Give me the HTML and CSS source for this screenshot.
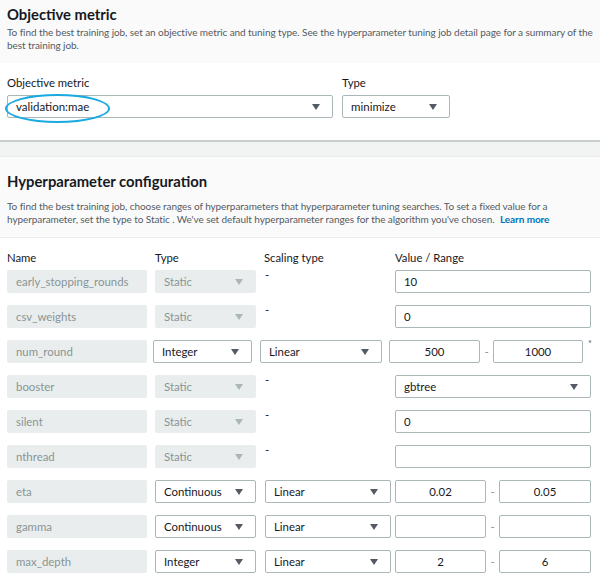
FILE: index.html
```html
<!DOCTYPE html>
<html>
<head>
<meta charset="utf-8">
<link rel="stylesheet" href="styles.css">
</head>
<body>
<div class="page">
  <div class="head head-top">
    <h2 class="title">Objective metric</h2>
    <p class="desc">To find the best training job, set an objective metric and tuning type. See the hyperparameter tuning job detail page for a summary of the best training job.</p>
  </div>
  <div class="objective">
    <div class="field field-metric">
      <div class="label">Objective metric</div>
      <div class="select sel-metric"><span class="highlight">validation:mae</span><i class="arrow"></i></div>
    </div>
    <div class="field field-type">
      <div class="label">Type</div>
      <div class="select sel-type"><span>minimize</span><i class="arrow"></i></div>
    </div>
  </div>
  <div class="divider"></div>
  <div class="head head-hp">
    <h2 class="title">Hyperparameter configuration</h2>
    <p class="desc">To find the best training job, choose ranges of hyperparameters that hyperparameter tuning searches. To set a fixed value for a hyperparameter, set the type to Static . We've set default hyperparameter ranges for the algorithm you've chosen. <a class="learn">Learn more</a></p>
  </div>
  <div class="table">
    <div class="row cols">
      <span class="c-name">Name</span><span class="c-type">Type</span><span class="c-scale">Scaling type</span><span class="c-val">Value / Range</span>
    </div>

    <div class="row">
      <div class="name">early_stopping_rounds</div>
      <div class="select static"><span>Static</span><i class="arrow"></i></div>
      <div class="nodash">-</div>
      <div class="input">10</div>
    </div>
    <div class="row">
      <div class="name">csv_weights</div>
      <div class="select static"><span>Static</span><i class="arrow"></i></div>
      <div class="nodash">-</div>
      <div class="input">0</div>
    </div>
    <div class="row row-num">
      <div class="name">num_round</div>
      <div class="select"><span>Integer</span><i class="arrow"></i></div>
      <div class="select"><span>Linear</span><i class="arrow"></i></div>
      <div class="input num">500</div>
      <div class="dash">-</div>
      <div class="input num">1000</div>
      <div class="star">*</div>
    </div>
    <div class="row">
      <div class="name">booster</div>
      <div class="select static"><span>Static</span><i class="arrow"></i></div>
      <div class="nodash">-</div>
      <div class="select"><span>gbtree</span><i class="arrow"></i></div>
    </div>
    <div class="row">
      <div class="name">silent</div>
      <div class="select static"><span>Static</span><i class="arrow"></i></div>
      <div class="nodash">-</div>
      <div class="input">0</div>
    </div>
    <div class="row">
      <div class="name">nthread</div>
      <div class="select static"><span>Static</span><i class="arrow"></i></div>
      <div class="nodash">-</div>
      <div class="input"></div>
    </div>
    <div class="row row-range">
      <div class="name">eta</div>
      <div class="select"><span>Continuous</span><i class="arrow"></i></div>
      <div class="select"><span>Linear</span><i class="arrow"></i></div>
      <div class="input num">0.02</div>
      <div class="dash">-</div>
      <div class="input num">0.05</div>
    </div>
    <div class="row row-range">
      <div class="name">gamma</div>
      <div class="select"><span>Continuous</span><i class="arrow"></i></div>
      <div class="select"><span>Linear</span><i class="arrow"></i></div>
      <div class="input num"></div>
      <div class="dash">-</div>
      <div class="input num"></div>
    </div>
    <div class="row row-range">
      <div class="name">max_depth</div>
      <div class="select"><span>Integer</span><i class="arrow"></i></div>
      <div class="select"><span>Linear</span><i class="arrow"></i></div>
      <div class="input num">2</div>
      <div class="dash">-</div>
      <div class="input num">6</div>
    </div>
  </div>
</div>
</body>
</html>
```

FILE: styles.css
```css
* { box-sizing: border-box; }
html, body { margin: 0; padding: 0; background: #fff; }
body {
  font-family: Lato, "Liberation Sans", sans-serif;
  color: #16191f;
  width: 600px;
  height: 581px;
  overflow: hidden;
}
.page { width: 600px; }

.head { background: #fafafa; padding: 0 7px; }
.head-top { height: 63px; padding-top: 4px; }
.head-hp { height: 81px; padding-top: 14px; border-bottom: 1px solid #eaeded; }
.title {
  margin: 0;
  font-size: 14.8px;
  line-height: 20px;
  font-weight: 700;
  color: #16191f;
}
.desc {
  margin: 0;
  font-size: 10px;
  letter-spacing: -0.08px;
  line-height: 12.5px;
  color: #545b64;
  padding-top: 2px;
}
.head-hp .desc { padding-top: 9px; width: 560px; line-height: 13px; }
.learn { color: #0073bb; font-weight: 700; margin-left: 3px; }

.objective {
  height: 77px;
  padding: 12px 7px 0;
  display: flex;
  gap: 9px;
}
.label { font-size: 11.3px; line-height: 16px; color: #16191f; height: 20px; }
.field-metric .select { width: 326px; }
.field-type .select { width: 108px; }

.select {
  height: 23px;
  border: 1px solid #aab7b8;
  border-radius: 2px;
  background: #fff;
  display: flex;
  align-items: center;
  justify-content: space-between;
  padding: 0 12px 0 8px;
  font-size: 11.5px;
  color: #16191f;
  position: relative;
}
.arrow {
  display: block;
  width: 0; height: 0;
  border-left: 4.5px solid transparent;
  border-right: 4.5px solid transparent;
  border-top: 6px solid #545b64;
}
.highlight { position: relative; }
.highlight::after {
  content: "";
  position: absolute;
  left: -11px; top: -6px;
  width: 101px; height: 25px;
  border: 2px solid #1aa9e1;
  border-radius: 50%;
}

.divider {
  height: 17px;
  border-top: 2px solid #c8cdce;
  background: #f2f3f3;
  border-bottom: 1px solid #eaeded;
}

.table { padding: 12px 7px 0; }
.row {
  display: flex;
  align-items: flex-start;
  height: 23px;
  margin-bottom: 12px;
  font-size: 11.4px;
}
.row.cols { height: 15px; margin-bottom: 5px; color: #16191f; line-height: 15px; font-size: 11.3px; }
.c-name { width: 148px; }
.c-type { width: 109px; }
.c-scale { width: 131px; }

.name {
  width: 140px;
  height: 23px;
  background: #eaeded;
  border-radius: 2px;
  color: #879596;
  line-height: 23px;
  padding-left: 9px;
  margin-right: 8px;
  flex: none;
}
.row > .select:nth-child(2) { width: 101px; margin-right: 9px; flex: none; }
.select.static { background: #eaeded; border-color: #eaeded; color: #879596; }
.select.static .arrow { border-top-color: #aab7b8; }
.nodash { width: 130px; color: #16191f; line-height: 10px; padding-left: 0; flex: none; }
.row > .input, .row > .select:nth-child(4) { width: 196px; flex: none; }
.row .select { font-size: 11.4px; }

.input {
  height: 23px;
  border: 1px solid #aab7b8;
  border-radius: 2px;
  background: #fff;
  line-height: 21px;
  padding-left: 8px;
  color: #16191f;
  font-size: 11.4px;
}
.input.num { text-align: center; padding-left: 0; }
.dash { color: #879596; line-height: 23px; text-align: center; flex: none; }

.row-range > .select:nth-child(3) { width: 126px; margin-right: 4px; flex: none; }
.row-range > .input.num { width: 91px; }
.row-range > .input.num:last-child { width: 92px; }
.row-range > .dash { width: 13px; }

.row-num > .select:nth-child(2) { width: 99px; margin-left: -2px; margin-right: 8px; }
.row-num > .select:nth-child(3) { width: 122px; margin-right: 7px; flex: none; }
.row-num > .input.num { width: 91px; }
.row-num > .input.num:nth-child(6) { width: 90px; }
.row-num > .dash { width: 13px; }
.star { font-size: 9px; color: #545b64; line-height: 8px; padding-left: 5px; }
```
